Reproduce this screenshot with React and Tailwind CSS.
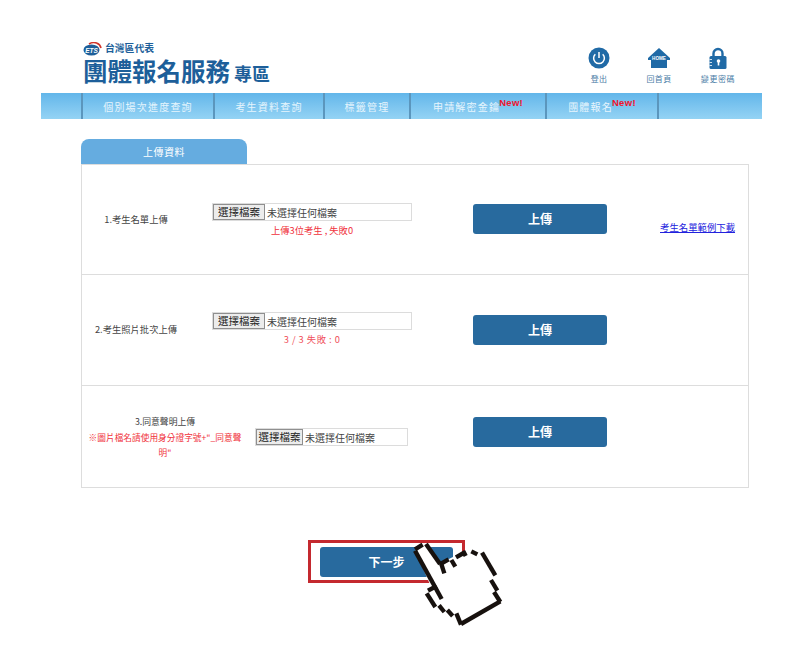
const CJK = { fontFamily: '"Noto Sans CJK TC", "Liberation Sans", sans-serif' };

function FileBox({ w }) {
  return (
    <div className={`flex h-[18px] items-center border border-[#dcdcdc] bg-white ${w}`}>
      <div className="flex h-full w-[52px] shrink-0 items-center justify-center border border-[#8f8f8f] bg-[#ececec] text-[10.5px] text-[#222]">
        選擇檔案
      </div>
      <span className="ml-[2px] text-[10px] text-[#444]">未選擇任何檔案</span>
    </div>
  );
}

function UploadBtn() {
  return (
    <div className="flex h-[30px] w-[134px] items-center justify-center rounded-[3px] bg-[#286a9e] text-[12px] font-bold text-white">
      上傳
    </div>
  );
}

function Nav() {
  const items = [
    ["個別場次進度查詢", "w-[132px]", false],
    ["考生資料查詢", "w-[110px]", false],
    ["標籤管理", "w-[86px]", false],
    ["申請解密金鑰", "w-[136px]", true],
    ["團體報名", "w-[112px]", true],
  ];
  return (
    <nav className="ml-[41px] flex h-[26px] w-[721px] bg-gradient-to-b from-[#62b6ea] to-[#94d3f4]">
      <div className="w-[40px]" />
      {items.map(([t, w, isNew]) => (
        <div key={t} className={`flex ${w} items-center justify-center border-l-2 border-[#5b96bd] text-[10px] tracking-[1.2px] text-[#e6f5fd]`}>
          <span>{t}</span>
          {isNew && (
            <span className="-ml-[1px] -mt-[6px] text-[9.5px] font-bold tracking-[0.3px] text-[#f0142d]" style={{ fontFamily: '"Liberation Sans", sans-serif' }}>
              New!
            </span>
          )}
        </div>
      ))}
      <div className="flex-1 border-l-2 border-[#5b96bd]" />
    </nav>
  );
}

function Hand() {
  const segs = [
    "M345 62 L425 207",
    "M345 58 L368 44",
    "M378 42 L420 102",
    "M418 104 L446 88",
    "M424 102 L433 130",
    "M454 90 L466 110",
    "M468 82 L496 66",
    "M490 64 L497 78",
    "M514 64 L532 73",
    "M546 68 L586 136",
    "M573 150 L592 182",
    "M582 186 L601 216",
    "M601 214 L483 282",
    "M483 284 L469 250",
    "M442 240 L458 258",
    "M417 226 L433 246",
    "M380 190 L406 231",
    "M384 182 L410 168",
  ];
  return (
    <svg className="absolute left-[300px] top-[530px]" width="210" height="105" viewBox="0 0 630 315">
      <polygon points="345,60 372,44 420,100 490,66 545,68 600,215 483,282 380,190 395,175" fill="#fff" />
      {segs.map((d) => (
        <path key={d} d={d} stroke="#17110e" strokeWidth="13" fill="none" />
      ))}
    </svg>
  );
}

export default function App() {
  return (
    <div className="relative h-[656px] w-[800px] overflow-hidden bg-white" style={CJK}>
      <header className="flex h-[93px] justify-between pl-[83px] pr-[64px]">
        <div className="pt-[41px] text-[#1d5f9a]">
          <div className="flex h-[15px] items-center gap-[3px]">
            <svg width="19" height="14" viewBox="0 0 19 14">
              <ellipse cx="8.5" cy="8" rx="8" ry="5.5" fill="#1d5f9a" />
              <path d="M6 2 C11 -1 17 1 18 6" stroke="#d0352b" strokeWidth="1.6" fill="none" />
              <text x="8.5" y="10.5" fontSize="6.5" fontWeight="700" fontStyle="italic" fill="#fff" textAnchor="middle" fontFamily="Liberation Sans">ETS</text>
            </svg>
            <span className="text-[9.8px] font-bold leading-none">台灣區代表</span>
          </div>
          <div className="flex items-end leading-none">
            <span className="text-[24.5px] font-bold leading-[29px]">團體報名服務</span>
            <span className="ml-[4px] text-[18px] font-bold leading-[24px]">專區</span>
          </div>
        </div>
        <div className="flex items-start pt-[47px]">
          <div className="flex w-[36px] flex-col items-center gap-[4px]">
            <svg width="22" height="22" viewBox="0 0 22 22">
              <circle cx="11" cy="11" r="10.5" fill="#206aa6" />
              <path d="M7.3 7.2 A5.4 5.4 0 1 0 14.7 7.2" stroke="#fff" strokeWidth="1.5" fill="none" />
              <path d="M11 5 V11" stroke="#fff" strokeWidth="1.5" />
            </svg>
            <span className="text-[8px] tracking-[0.3px] text-[#4a7ca6]">登出</span>
          </div>
          <div className="ml-[24px] flex w-[36px] flex-col items-center gap-[4px]">
            <svg width="24" height="22" viewBox="0 0 24 22">
              <path d="M12 1 L23 11 V13 H20 V21 H4 V13 H1 V11 Z" fill="#206aa6" />
              <text x="12" y="13" fontSize="4.6" fontWeight="700" fill="#fff" textAnchor="middle" fontFamily="Liberation Sans">HOME</text>
            </svg>
            <span className="text-[8px] tracking-[0.3px] text-[#4a7ca6]">回首頁</span>
          </div>
          <div className="ml-[23px] flex w-[36px] flex-col items-center gap-[4px]">
            <svg width="18" height="22" viewBox="0 0 18 22">
              <path d="M4.5 10 V6.5 A4.5 4.5 0 0 1 13.5 6.5 V10" stroke="#206aa6" strokeWidth="2.4" fill="none" />
              <rect x="0.5" y="9" width="17" height="13" rx="1.5" fill="#206aa6" />
              <circle cx="9.5" cy="14" r="1.8" fill="#fff" />
              <path d="M9.5 14 V18.5" stroke="#fff" strokeWidth="1.6" />
              <path d="M0.5 12.5 H3 M0.5 15.5 H3 M0.5 18.5 H3" stroke="#fff" strokeWidth="0.8" />
            </svg>
            <span className="whitespace-nowrap text-[8px] tracking-[0.6px] text-[#4a7ca6]">變更密碼</span>
          </div>
        </div>
      </header>

      <Nav />

      <main className="ml-[81px] mt-[20px] w-[668px]">
        <div className="flex h-[25px] w-[166px] items-center justify-center rounded-t-[8px] bg-[#65ace0] text-[10px] tracking-[0.5px] text-white">
          上傳資料
        </div>
        <div className="border border-[#dddddd]">
          <section className="flex h-[110px] border-b border-[#dddddd]">
            <div className="w-[108px] pt-[47px] text-center text-[9.3px] leading-[15px] text-[#444]">1.考生名單上傳</div>
            <div className="ml-[22px] w-[200px] pt-[38px]">
              <FileBox w="w-[200px]" />
              <p className="mt-[2px] text-center text-[9.3px] leading-[14px] text-[#f0323c]">上傳3位考生 , 失敗0</p>
            </div>
            <div className="ml-[61px] pt-[39px]"><UploadBtn /></div>
            <div className="ml-[53px] pt-[47px]">
              <a className="text-[9.4px] leading-[15px] text-[#2222dd] underline">考生名單範例下載</a>
            </div>
          </section>
          <section className="flex h-[111px] border-b border-[#dddddd]">
            <div className="w-[108px] pt-[47px] text-center text-[9.3px] leading-[15px] text-[#444]">2.考生照片批次上傳</div>
            <div className="ml-[22px] w-[200px] pt-[37px]">
              <FileBox w="w-[200px]" />
              <p className="mt-[2px] text-center text-[9.3px] leading-[14px] tracking-[0.5px] text-[#f0505a]">3 / 3 失敗 : 0</p>
            </div>
            <div className="ml-[61px] pt-[40px]"><UploadBtn /></div>
          </section>
          <section className="flex h-[101px]">
            <div className="w-[166px] pt-[28px] text-center text-[8.8px] leading-[15.5px] text-[#444]">
              <p>3.同意聲明上傳</p>
              <p className="px-[3px] text-[8.7px] text-[#f0323c]">※圖片檔名請使用身分證字號+"_同意聲明"</p>
            </div>
            <div className="ml-[7px] w-[153px] pt-[42px]">
              <div className="flex h-[18px] w-[153px] items-center border border-[#dcdcdc] bg-white">
                <div className="flex h-full w-[47px] shrink-0 items-center justify-center border border-[#8f8f8f] bg-[#ececec] text-[10.5px] text-[#222]">
                  選擇檔案
                </div>
                <span className="ml-[2px] text-[10px] text-[#444]">未選擇任何檔案</span>
              </div>
            </div>
            <div className="ml-[65px] pt-[31px]"><UploadBtn /></div>
          </section>
        </div>
      </main>

      <div className="ml-[308px] mt-[52px] flex h-[43px] w-[157px] items-center justify-center border-[3px] border-[#c4292f]">
        <div className="flex h-[30px] w-[133px] items-center justify-center rounded-[3px] bg-[#286a9e] text-[12px] font-bold text-white">
          下一步
        </div>
      </div>

      <Hand />
    </div>
  );
}
